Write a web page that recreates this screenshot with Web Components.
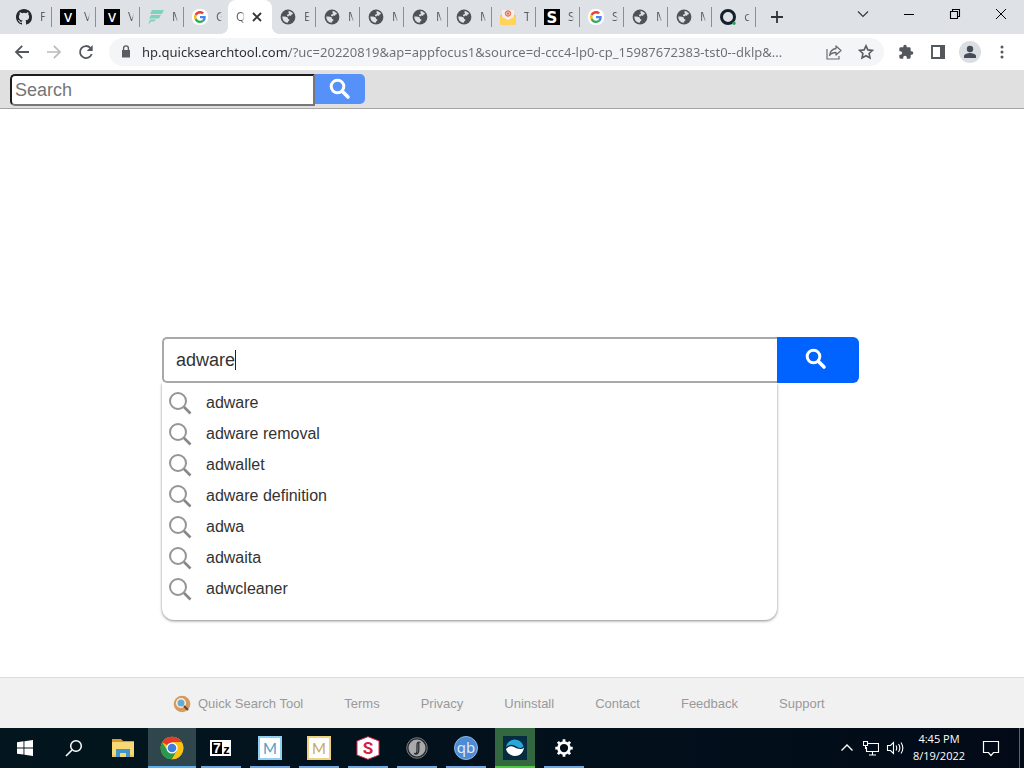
<!DOCTYPE html>
<html lang="en">
<head>
<meta charset="utf-8">
<title>Quick Search Tool</title>
<style>
html, body { margin: 0; height: 100%; }
body { font-family: "Liberation Sans", Arial, sans-serif; background: #fff; }
</style>
</head>
<body>
<desktop-screen></desktop-screen>
<script>
const ICONS = {
github: ['0 0 16 16', '<path fill="#24292f" d="M8 0C3.58 0 0 3.58 0 8c0 3.54 2.29 6.53 5.47 7.59.4.07.55-.17.55-.38 0-.19-.01-.82-.01-1.49-2.01.37-2.53-.49-2.69-.94-.09-.23-.48-.94-.82-1.13-.28-.15-.68-.52-.01-.53.63-.01 1.08.58 1.23.82.72 1.21 1.87.87 2.33.66.07-.52.28-.87.51-1.07-1.78-.2-3.64-.89-3.64-3.95 0-.87.31-1.59.82-2.15-.08-.2-.36-1.02.08-2.12 0 0 .67-.21 2.2.82a7.6 7.6 0 0 1 4 0c1.53-1.04 2.2-.82 2.2-.82.44 1.1.16 1.92.08 2.12.51.56.82 1.27.82 2.15 0 3.07-1.87 3.75-3.65 3.95.29.25.54.73.54 1.48 0 1.07-.01 1.93-.01 2.2 0 .21.15.46.55.38A8 8 0 0 0 16 8c0-4.42-3.58-8-8-8z"/>'],
vsite: ['0 0 16 16', '<path d="M0 0h16v16H0z"/><text x="8" y="12.5" text-anchor="middle" font-family="Open Sans" font-weight="600" font-size="13" fill="#fff">V</text>'],
feather: ['0 0 16 16', '<path fill="#7fd3bd" d="M4 1h12l-2 4H2zM3 6h10l-2 3.500H1zM2 10.500h6l-2 2H3L0 16z"/>'],
google: ['0 0 16 16', '<rect width="16" height="16" rx="7" fill="#fff"/><g transform="translate(2 2) scale(.25)"><path fill="#EA4335" d="M24 9.500c3.500 0 6.700 1.200 9.200 3.600l6.900-6.900C35.900 2.400 30.500 0 24 0 14.600 0 6.500 5.400 2.600 13.200l8 6.200C12.400 13.700 17.700 9.500 24 9.500z"/><path fill="#4285F4" d="M47 24.500c0-1.600-.2-3.100-.4-4.500H24v9h12.900a11 11 0 0 1-4.700 7.200l7.700 6C44.400 38 47 31.800 47 24.500z"/><path fill="#FBBC05" d="M10.500 28.600a14 14 0 0 1 0-9.200l-8-6.200a24 24 0 0 0 0 21.600z"/><path fill="#34A853" d="M24 48c6.500 0 11.900-2.100 15.900-5.800l-7.700-6A14 14 0 0 1 24 38.500c-6.300 0-11.600-4.200-13.500-9.900l-8 6.200C6.500 42.600 14.600 48 24 48z"/></g>'],
globe: ['0 0 16 16', '<circle cx="8" cy="8" r="7.400" fill="#4f5358"/><path fill="#dee1e6" d="M2.300 7.600c1.800-.4 3.800-.2 5 .7 1 .8.300 1.700 1.500 2 1 .3.600 1.400-.2 1.800-.8.500-.3 1.400-1.300 1.700C4.600 13.600 2.300 11.200 2.300 7.600zM8.600 2.100c1.900.2 3.600 1.300 4.500 2.900l-1.500.4-.6 1.300-2-.1-.6 1-1.400-.6.300-1.600 1.800-.4-.6-1.200z"/>'],
mail: ['0 0 16 16', '<path fill="#f5b93c" d="M0 7l8-6 8 6v9H0z"/><path fill="#f7efe7" d="M2 1h12v10H2z"/><circle cx="8" cy="4.500" r="2.700" fill="#f5c4b2" stroke="#dd5a47"/><circle cx="8" cy="4.500" r="1" fill="#dd5a47"/><path fill="#ffd35c" d="M0 7l8 4 8-4v9H0z"/>'],
ssite: ['0 0 16 16', '<path d="M0 0h16v16H0z"/><text x="8" y="13.500" text-anchor="middle" font-family="DejaVu Sans" font-weight="700" font-size="15" fill="#fff">S</text>'],
ring: ['0 0 16 16', '<ellipse cx="8" cy="8" rx="6.500" ry="6.500" fill="none" stroke="#16202c" stroke-width="3"/><circle cx="14" cy="14.300" r="1.700" fill="#26a65b"/>'],
close: ['0 0 16 16', '<path d="M4 4l8 8M12 4l-8 8" stroke="#303338" stroke-width="1.800"/>'],
plus: ['0 0 16 16', '<path d="M8 2v12M2 8h12" stroke="#303338" stroke-width="1.800"/>'],
chev: ['0 0 16 16', '<path d="M3 5.500l5 5 5-5" fill="none" stroke="#333" stroke-width="1.100"/>'],
min: ['0 0 16 16', '<path d="M3 8.500h10" stroke="#000"/>'],
restore: ['0 0 16 16', '<path d="M3.500 5.500h7v7h-7zM5.500 5.500v-2h7v7h-2" fill="none" stroke="#000" stroke-width="1.100"/>'],
winclose: ['0 0 16 16', '<path d="M3 3l10 10M13 3L3 13" stroke="#000" stroke-width="1"/>'],
back: ['0 0 16 16', '<path d="M15 8H2M8.200 1.800L2 8l6.200 6.200" fill="none" stroke="#54585c" stroke-width="1.800"/>'],
fwd: ['0 0 16 16', '<path d="M1 8h13M7.800 1.800L14 8l-6.200 6.200" fill="none" stroke="#b9bbbe" stroke-width="1.700"/>'],
reload: ['0 0 16 16', '<path d="M13.700 10A6 6 0 1 1 12.400 3.900" fill="none" stroke="#54585c" stroke-width="1.800"/><path fill="#54585c" d="M14.700 1v6H8.700z"/>'],
lock: ['0 0 16 16', '<path fill="#5a5e63" d="M4 6h8v7.500H4z"/><path d="M5.600 6.500V4.300a2.400 2.400 0 0 1 4.800 0v2.200" fill="none" stroke="#5a5e63" stroke-width="1.400"/>'],
share: ['0 0 16 16', '<path d="M1 5v10h12v-3" fill="none" stroke="#6a6d71" stroke-width="1.200"/><path d="M10 2l5 4.500-5 4.500V8.500c-3 0-5 .8-6.500 3C4 8 6 5 10 4.500z" fill="none" stroke="#6a6d71" stroke-width="1.300" stroke-linejoin="round"/>'],
star: ['0 0 16 16', '<path d="M8 1.800l1.900 4.100 4.500.5-3.300 3.100.9 4.500-4-2.300L4 14l.9-4.500L1.600 6.400l4.500-.5z" fill="none" stroke="#5a5e63" stroke-width="1.600"/>'],
puzzle: ['0 0 24 24', '<path fill="#54585c" d="M20.500 11H19V7a2 2 0 0 0-2-2h-4V3.500a2.500 2.500 0 0 0-5 0V5H4a2 2 0 0 0-2 2v3.800h1.500a2.700 2.700 0 0 1 0 5.400H2V20c0 1.100.9 2 2 2h3.800v-1.500a2.700 2.700 0 0 1 5.400 0V22H17a2 2 0 0 0 2-2v-4h1.500a2.500 2.500 0 0 0 0-5z"/>'],
panel: ['0 0 16 16', '<path d="M2 2h12v12H2z" fill="none" stroke="#54585c" stroke-width="1.900"/><path fill="#54585c" d="M10 1h5v14h-5z"/>'],
avatar: ['0 0 22 22', '<circle cx="11" cy="11" r="11" fill="#dadde2"/><circle cx="11" cy="8" r="3.200" fill="#454c58"/><path fill="#454c58" d="M5 17v-2c0-2 4-3 6-3s6 1 6 3v2z"/>'],
dots: ['0 0 16 16', '<g fill="#54585c"><circle cx="8" cy="3" r="1.500"/><circle cx="8" cy="8" r="1.500"/><circle cx="8" cy="13" r="1.500"/></g>'],
find: ['0 0 22 22', '<circle cx="8.500" cy="8.500" r="6.300" fill="none" stroke="#fff" stroke-width="3"/><path d="M13.500 13.500l5.500 5.500" stroke="#fff" stroke-width="3.600" stroke-linecap="round"/>'],
lens: ['0 0 24 24', '<circle cx="10" cy="10" r="8" fill="none" stroke="#959595" stroke-width="2"/><path d="M16 16l6.500 6.500" stroke="#888" stroke-width="2.600"/>'],
brand: ['0 0 18 18', '<circle cx="9" cy="9" r="8.300" fill="#d79a5c"/><circle cx="8" cy="8" r="4.300" fill="#69a9c9" stroke="#f5eee5" stroke-width="1.600"/><path d="M11 11l4 4" stroke="#5c4540" stroke-width="2"/>'],
win: ['0 0 16 16', '<path fill="#fff" d="M0 2.300L6.500 1.300V7.500H0zM7.400 1.200L16 0v7.500H7.400zM0 8.400h6.500v6.200L0 13.700zM7.400 8.400H16V16l-8.600-1.200z"/>'],
tsearch: ['0 0 18 18', '<circle cx="11" cy="7" r="5.300" fill="none" stroke="#fff" stroke-width="1.500"/><path d="M7 11l-6 6" stroke="#fff" stroke-width="1.600"/>'],
folder: ['0 0 24 24', '<path fill="#d99a2b" d="M1 3h9l2 2h11v5H1z"/><path fill="#f8d775" d="M1 6h22v15H1z"/><path fill="#3f97c8" d="M5 13h14v8h-4v-4H9v4H5z"/><path fill="#f2c75a" d="M1 19h4v2H1zM19 19h4v2h-4z"/>'],
chrome: ['0 0 24 24', '<circle cx="12" cy="12" r="11.300" fill="#fbc116"/><path fill="#e33b2e" d="M12 12L2.200 6.300A11.300 11.300 0 0 1 21.800 6.300H12z"/><path fill="#269b4d" d="M2.200 6.300A11.300 11.300 0 0 0 12 23.300l5-8.500L12 12H5.600z"/><path fill="#fbc116" d="M21.800 6.300H12l5 8.500-5 8.500A11.300 11.300 0 0 0 21.800 6.300z"/><circle cx="12" cy="12" r="5.600" fill="#fff"/><circle cx="12" cy="12" r="4.300" fill="#3f7de0"/>'],
seven: ['0 0 24 24', '<path fill="#fff" d="M1 4h21v16H1z"/><path d="M3 6h10v12H3z"/><text x="8" y="17" text-anchor="middle" font-family="Liberation Sans" font-weight="700" font-size="14" fill="#fff">7</text><text x="17.500" y="18" text-anchor="middle" font-family="Liberation Sans" font-weight="700" font-size="13">z</text>'],
mblue: ['0 0 24 24', '<path fill="#fff" stroke="#8dd0f5" stroke-width="2" d="M1 1h22v22H1z"/><text x="12" y="17.500" text-anchor="middle" font-family="Lato" font-size="15" fill="#4d9fc7">M</text>'],
mgold: ['0 0 24 24', '<path fill="#fff" stroke="#efd27d" stroke-width="2" d="M1 1h22v22H1z"/><text x="12" y="17.500" text-anchor="middle" font-family="Lato" font-size="15" fill="#c8aa5b">M</text>'],
shex: ['0 0 24 24', '<path fill="#fff" stroke="#d92b4b" d="M12 .7L23 5v14l-11 4.300L1 19V5z"/><text x="12" y="18" text-anchor="middle" font-family="Roboto" font-weight="700" font-size="17" fill="#d5223f">S</text>'],
steer: ['0 0 24 24', '<circle cx="12" cy="12" r="10.300" fill="#252b2e" stroke="#777"/><circle cx="12" cy="12" r="8.500" fill="#a8aaab"/><path d="M15.500 6.500c-3-1-3.500.5-3.500 3v5c0 2.500-.8 3.500-3 3M13.800 7v7c0 3-1.500 4.500-3.500 4" fill="none" stroke="#292d30" stroke-width="1.300"/>'],
qb: ['0 0 24 24', '<circle cx="12" cy="12" r="11.500" fill="#4e8bd2" stroke="#8ab9ec"/><text x="12" y="17" text-anchor="middle" font-family="Open Sans" font-size="15" fill="#e4f0fb">qb</text>'],
wave: ['0 0 24 24', '<path fill="#062c40" d="M0 0h24v24H0z"/><path fill="#28a7dd" d="M3 11a9 9 0 0 1 17.500-1c-3 4-6 1-9-.5-3-1.400-6-.5-8.500 1.500z"/><path fill="#fff" d="M3 13c2-2.500 5-3.500 8-2s7 3.500 10 .5c-.5 5-4.500 8.500-9 8.500s-8-3-9-7z"/>'],
gear: ['0 0 24 24', '<circle cx="12" cy="12" r="6" fill="none" stroke="#fff" stroke-width="3"/><path stroke="#fff" stroke-width="3" d="M12 2.500v3M12 18.500v3M2.500 12h3M18.500 12h3M5.300 5.300l2.100 2.100M16.600 16.600l2.100 2.100M18.700 5.300l-2.100 2.100M7.400 16.600l-2.100 2.100"/>'],
up: ['0 0 16 16', '<path d="M2.500 10.500L8 5l5.500 5.500" fill="none" stroke="#fff" stroke-width="1.400"/>'],
net: ['0 0 16 16', '<path d="M5 3.500h10.500v8H3.500V7M9.500 12v3M6 15h7M.5 1.500h4v4h-4zM2.500 5.500v3.500" fill="none" stroke="#fff" stroke-width="1.100"/>'],
sound: ['0 0 18 18', '<path d="M1.500 6.500h3l3-3v11l-3-3h-3z" fill="none" stroke="#fff" stroke-width="1.100"/><path d="M10 6.500q1.500 2.500 0 5M12.500 5q2.700 4 0 8M15 3.500q3.700 5.500 0 11" fill="none" stroke="#fff" stroke-width="1.100"/>'],
note: ['0 0 18 18', '<path d="M1.500 2.500h15v11h-5l-2.500 3-2.500-3h-5z" fill="none" stroke="#fff" stroke-width="1.200"/>']
};

function define(name, render) {
  customElements.define(name, class extends HTMLElement {
    connectedCallback() {
      if (this.shadowRoot) return;
      const t = document.createElement('template');
      t.innerHTML = '<style>*{box-sizing:border-box}button{font:inherit;border:0;padding:0;margin:0;background:none;display:flex;align-items:center;justify-content:center}a{color:inherit;text-decoration:none}</style>' + render(this);
      this.attachShadow({ mode: 'open' }).append(t.content.cloneNode(true));
    }
  });
}
const icon = (name, size = 16) => `<ui-icon name="${name}" size="${size}"></ui-icon>`;

define('ui-icon', el => {
  const [box, body] = ICONS[el.getAttribute('name')], s = el.getAttribute('size');
  return `<style>:host{display:block;flex:none;width:${s}px;height:${s}px}svg{display:block}</style>
  <svg width="${s}" height="${s}" viewBox="${box}" aria-hidden="true">${body}</svg>`;
});

define('browser-tab', el => `<style>
:host{display:block;flex:0 1 44px;min-width:0;height:34px}
button{width:100%;height:100%;padding-left:8px;gap:8px;justify-content:flex-start;position:relative;color:#5a5d62;font-size:12px}
:host(:not([active]):not([last-before])) button{background:linear-gradient(#8b8e93,#8b8e93) right center/1px 20px no-repeat}
.title{flex:none;width:6px;overflow:hidden;white-space:nowrap;line-height:16px;-webkit-mask-image:linear-gradient(90deg,#000 60%,transparent)}
:host([active]) button{background:#fff;border-radius:8px 8px 0 0;gap:4px}
:host([active]) .title{width:9px}
button.on::before,button.on::after{content:"";position:absolute;bottom:0;width:8px;height:8px}
button.on::before{left:-8px;background:radial-gradient(circle at 0 0,transparent 8px,#fff 8px)}
button.on::after{right:-8px;background:radial-gradient(circle at 100% 0,transparent 8px,#fff 8px)}
</style>${el.hasAttribute('active')
  ? `<button class="on" role="tab" aria-selected="true"><span class="title"><slot></slot></span>${icon('close')}</button>`
  : `<button role="tab">${icon(el.getAttribute('icon'))}<span class="title"><slot></slot></span></button>`}`);

define('tab-strip', () => {
  const tabs = [['github','F'],['vsite','V'],['vsite','V'],['feather','M'],['google','G','last-before'],['','Q','active'],
    ['globe','E'],['globe','M'],['globe','M'],['globe','M'],['globe','M'],['mail','T'],['ssite','S'],['google','S'],['globe','M'],['globe','M'],['ring','c']];
  return `<style>
:host{display:flex;height:34px;background:#dee1e6;padding-left:8px;font-family:"Open Sans","Noto Sans",sans-serif}
.tabs{display:flex;flex:0 1 748px;min-width:0}
.new{width:28px;height:34px;margin-left:7px}
.window{display:flex;margin-left:auto;height:28px}
.window button{width:46px}
</style><div class="tabs" role="tablist">${tabs.map(([i, t, a = '']) => `<browser-tab icon="${i}" ${a}>${t}</browser-tab>`).join('')}</div>
<button class="new" aria-label="New tab">${icon('plus')}</button>
<div class="window">${['chev','min','restore','winclose'].map(i => `<button aria-label="${i}">${icon(i)}</button>`).join('')}</div>`;
});

define('address-bar', () => `<style>
:host{display:flex;align-items:center;height:36px;padding:0 6px;background:#fff;font-family:"Noto Sans","Open Sans",sans-serif}
button{width:32px;height:28px;flex:none}
.pill{display:flex;align-items:center;flex:1;min-width:0;height:28px;margin:0 6px 0 7px;padding:0 2px 0 9px;border-radius:14px;background:#f4f5f6}
input{flex:1;min-width:0;height:24px;margin:0 8px;padding:0;border:0;outline:0;font:13px/24px "Noto Sans","Open Sans",sans-serif;color:#5f6368;
background:linear-gradient(90deg,#2a2c30 147px,#6b6e73 147px);-webkit-background-clip:text;background-clip:text;-webkit-text-fill-color:transparent}
</style><button aria-label="Back">${icon('back')}</button><button aria-label="Forward">${icon('fwd')}</button><button aria-label="Reload">${icon('reload')}</button>
<div class="pill">${icon('lock')}<input aria-label="Address" value="hp.quicksearchtool.com/?uc=20220819&amp;ap=appfocus1&amp;source=d-ccc4-lp0-cp_15987672383-tst0--dklp&amp;...">
<button aria-label="Share">${icon('share')}</button><button aria-label="Bookmark">${icon('star')}</button></div>
<button aria-label="Extensions">${icon('puzzle')}</button><button aria-label="Side panel">${icon('panel')}</button><button aria-label="Profile">${icon('avatar', 22)}</button><button aria-label="Menu">${icon('dots')}</button>`);

define('tool-header', () => `<style>
:host{display:block;background:#e0e0e0;border-bottom:1px solid #a4a4a4;padding:4px 10px 2px}
form{display:flex;align-items:flex-start}
input{width:305px;height:32px;border:2px solid;border-color:#1c1c1c #777 #777 #1c1c1c;border-radius:5px 0 0 5px;padding:0 3px;font:18px/26px "Liberation Sans",Arial,sans-serif;outline:0;background:#fff}
input::placeholder{color:#757575}
button{width:50px;height:30px;background:#5591f8;border-radius:0 5px 5px 0}
</style><form role="search"><input aria-label="Search" placeholder="Search"><button type="button" aria-label="Go">${icon('find', 22)}</button></form>`);

define('suggestion-item', () => `<style>
:host{display:block}
a{display:flex;align-items:center;gap:14px;height:31px;padding-left:6px;font-size:16px;line-height:20px;color:#333}
</style><a href="#">${icon('lens', 24)}<slot></slot></a>`);

define('search-panel', () => `<style>
:host{display:block;width:100%;max-width:700px;padding-right:3px;margin:0 auto;box-sizing:border-box}
form{display:flex}
input{flex:1;min-width:0;height:46px;border:2px solid #a9a9a9;border-right:0;border-radius:5px 0 0 5px;padding:0 12px;outline:0;color:#333;font:18px/26px "Liberation Sans",Arial,sans-serif;
background:linear-gradient(#222,#222) 71px center/1px 20px no-repeat #fff}
form button{width:82px;height:46px;background:#0062ff;border-radius:0 6px 6px 0;padding:0 4px 2px 0}
.list{margin-right:82px;height:237px;padding-top:4px;border-radius:0 0 12px 12px;background:#fff;box-shadow:0 1px 3px #0007;clip-path:inset(0 -6px -6px -6px)}
</style><form role="search"><input aria-label="Search the web" value="adware"><button type="button" aria-label="Search">${icon('find', 22)}</button></form>
<div class="list">${['adware','adware removal','adwallet','adware definition','adwa','adwaita','adwcleaner'].map(s => `<suggestion-item>${s}</suggestion-item>`).join('')}</div>`);

define('site-footer', () => `<style>
:host{display:block;border-top:1px solid #dcdcdc;background:#f1f1f1}
nav{display:flex;align-items:center;gap:41px;width:100%;max-width:678px;margin:0 auto;height:50px;padding-top:2px;font-size:13px;line-height:16px;color:#999;white-space:nowrap}
.brand{display:flex;align-items:center;gap:7px}
</style><nav><a class="brand" href="#">${icon('brand', 18)}Quick Search Tool</a>${['Terms','Privacy','Uninstall','Contact','Feedback','Support'].map(s => `<a href="#">${s}</a>`).join('')}</nav>`);

define('task-item', el => `<style>
:host{display:block;flex:0 1 48px;height:40px;padding:0 4px;box-sizing:border-box}
button{width:100%;height:100%;border-bottom:2px solid transparent;border-top:2px solid transparent}
:host([state]) button{border-bottom-color:#6fa8e4}
:host([state=active]){padding:0}
:host([state=active]) button{background:#2f464c;border-top-color:#2f464c;border-bottom-color:#5cb0ee}
:host([state=alert]) button{background:#32673f;border-top-color:#32673f;border-bottom-color:#4ccb3e}
</style><button aria-label="${el.getAttribute('icon')}">${icon(el.getAttribute('icon'), el.getAttribute('size') || 24)}</button>`);

define('system-tray', () => `<style>
:host{display:flex;align-items:center;margin-left:auto;height:40px;color:#fff;font-family:"Open Sans","Noto Sans",sans-serif}
button{width:24px;height:40px}
.clock{width:64px;padding-bottom:2px;text-align:center;font-size:11px;line-height:17px}
.note{width:40px}
.edge{width:5px;height:40px;margin-left:8px;border-left:1px solid #59636d}
</style><button aria-label="Show hidden icons">${icon('up')}</button><button aria-label="Network">${icon('net')}</button><button aria-label="Volume">${icon('sound', 18)}</button>
<div class="clock"><div>4:45 PM</div><div>8/19/2022</div></div><button class="note" aria-label="Notifications">${icon('note', 18)}</button><span class="edge"></span>`);

define('task-bar', () => `<style>
:host{display:flex;height:40px;background:linear-gradient(90deg,#02161e,#02101c 60%,#020a18)}
.apps{display:flex;gap:1px;flex:0 1 589px;min-width:0;padding-left:1px}
</style><div class="apps"><task-item icon="win" size="16"></task-item><task-item icon="tsearch" size="18"></task-item><task-item icon="folder"></task-item><task-item icon="chrome" state="active"></task-item>
${['seven','mblue','mgold','shex','steer','qb'].map(i => `<task-item icon="${i}" state="open"></task-item>`).join('')}
<task-item icon="wave" state="alert"></task-item><task-item icon="gear" state="open" size="22"></task-item></div><system-tray></system-tray>`);

define('desktop-screen', () => `<style>
:host{display:flex;flex-direction:column;min-height:100vh}
main{flex:1;display:flex;flex-direction:column;justify-content:flex-end;padding-bottom:57px}
</style><tab-strip></tab-strip><address-bar></address-bar><tool-header></tool-header><main><search-panel></search-panel></main><site-footer></site-footer><task-bar></task-bar>`);
</script>
</body>
</html>
